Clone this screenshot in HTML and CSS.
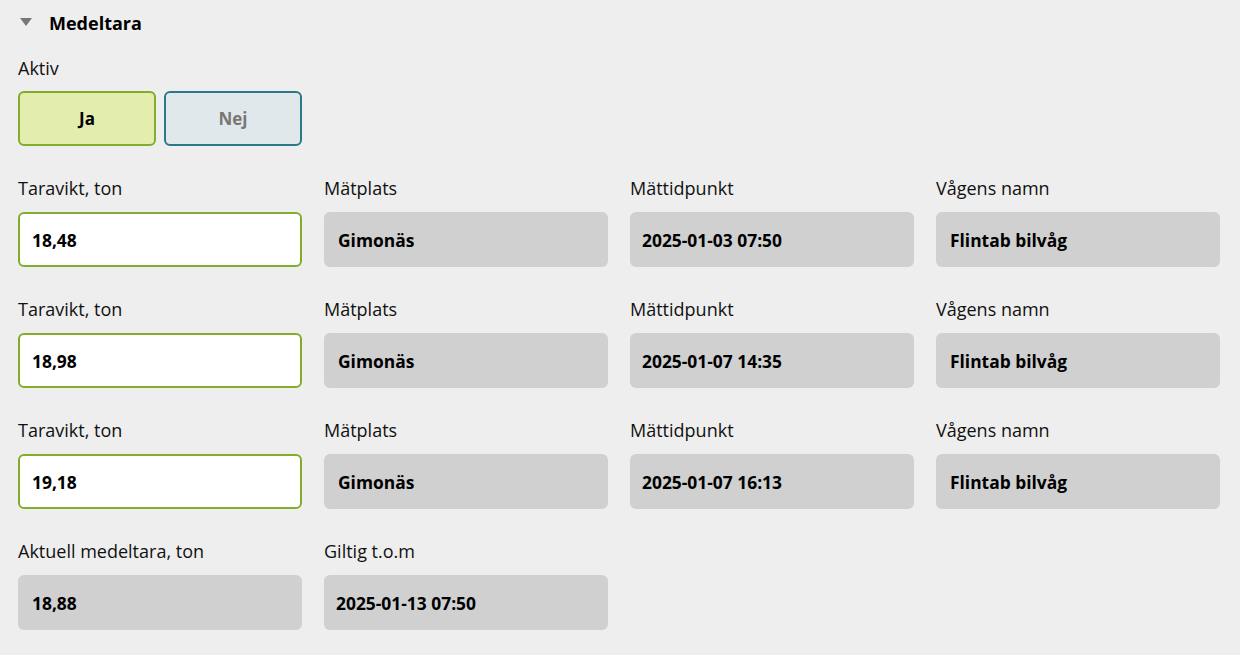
FILE: index.html
```html
<!DOCTYPE html>
<html lang="sv">
<head>
<meta charset="utf-8">
<title>Medeltara</title>
<link rel="stylesheet" href="styles.css">
</head>
<body>
<section class="panel">
  <div class="head">
    <svg class="caret" width="12" height="8" viewBox="0 0 12 8"><path d="M0 0H12L6 8Z" fill="#777"/></svg>
    <h2 class="title">Medeltara</h2>
  </div>

  <div class="aktiv">
    <div class="label">Aktiv</div>
    <div class="toggle">
      <button class="btn btn-on">Ja</button>
      <button class="btn btn-off">Nej</button>
    </div>
  </div>

  <div class="grid">
    <div class="field"><div class="label">Taravikt, ton</div><div class="box input">18,48</div></div>
    <div class="field"><div class="label">Mätplats</div><div class="box ro">Gimonäs</div></div>
    <div class="field"><div class="label">Mättidpunkt</div><div class="box ro date">2025-01-03 07:50</div></div>
    <div class="field"><div class="label">Vågens namn</div><div class="box ro">Flintab bilvåg</div></div>

    <div class="field"><div class="label">Taravikt, ton</div><div class="box input">18,98</div></div>
    <div class="field"><div class="label">Mätplats</div><div class="box ro">Gimonäs</div></div>
    <div class="field"><div class="label">Mättidpunkt</div><div class="box ro date">2025-01-07 14:35</div></div>
    <div class="field"><div class="label">Vågens namn</div><div class="box ro">Flintab bilvåg</div></div>

    <div class="field"><div class="label">Taravikt, ton</div><div class="box input">19,18</div></div>
    <div class="field"><div class="label">Mätplats</div><div class="box ro">Gimonäs</div></div>
    <div class="field"><div class="label">Mättidpunkt</div><div class="box ro date">2025-01-07 16:13</div></div>
    <div class="field"><div class="label">Vågens namn</div><div class="box ro">Flintab bilvåg</div></div>

    <div class="field"><div class="label">Aktuell medeltara, ton</div><div class="box ro">18,88</div></div>
    <div class="field"><div class="label">Giltig t.o.m</div><div class="box ro date">2025-01-13 07:50</div></div>
  </div>
</section>
</body>
</html>
```
FILE: styles.css
```css
* { box-sizing: border-box; }
body {
  margin: 0;
  background: #eeeeee;
  font-family: "Open Sans", "Noto Sans", sans-serif;
  color: #111;
}
.panel {
  padding: 11px 19px 0 18px;
}
.head {
  display: flex;
  align-items: center;
  height: 24px;
}
.caret {
  margin-left: 2px;
  margin-right: 17px;
  margin-top: -2px;
}
.title {
  margin: 0;
  font-size: 18px;
  font-weight: 700;
  line-height: 24px;
  color: #000;
}
.aktiv {
  margin-top: 21px;
  display: flex;
  flex-direction: column;
  gap: 11px;
}
.label {
  font-size: 18px;
  line-height: 24px;
  color: #111;
}
.toggle {
  display: flex;
  gap: 8px;
}
.btn {
  width: 138px;
  height: 55px;
  border-radius: 6px;
  border: 2px solid;
  font-family: inherit;
  font-size: 17px;
  font-weight: 700;
  padding: 0;
}
.btn-on {
  background: #e3eeae;
  border-color: #82ad2c;
  color: #000;
}
.btn-off {
  background: #e1e8eb;
  border-color: #2b7889;
  color: #777;
}
.grid {
  margin-top: 30px;
  display: grid;
  grid-template-columns: repeat(4, 284px);
  column-gap: 22px;
  row-gap: 30px;
}
.field {
  display: flex;
  flex-direction: column;
  gap: 12px;
}
.box {
  height: 55px;
  border-radius: 6px;
  display: flex;
  align-items: center;
  padding: 0 14px;
  font-size: 17.4px;
  font-weight: 700;
  color: #000;
}
.input {
  background: #fff;
  border: 2px solid #82ad2c;
  padding: 0 12px;
}
.ro {
  background: #d0d0d0;
}
.ro.date {
  padding: 0 12px;
}
```
